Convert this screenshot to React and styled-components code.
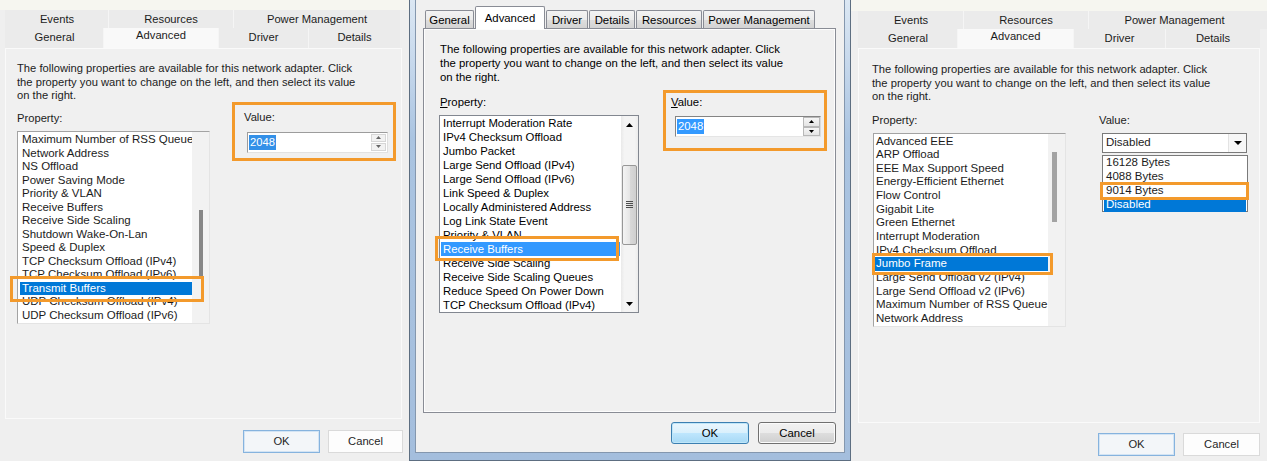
import React from 'react';
import styled, { createGlobalStyle } from 'styled-components';

const ORANGE = '#f39a2c';

const Global = createGlobalStyle`
  html, body { margin: 0; padding: 0; background: #f0f0f0; }
  body { font-family: "Liberation Sans", Arial, sans-serif; }
  * { box-sizing: border-box; }
`;

const Stage = styled.main`
  display: flex;
  width: 1267px;
  height: 461px;
  overflow: hidden;
  background: #f0f0f0;
`;

/* ---------------- shared ---------------- */
const Desc = styled.p`
  margin: 0 0 0 ${p => p.$ml || 0}px;
  white-space: nowrap;
  & > span { display: block; }
`;

const FieldRow = styled.div`
  display: flex;
  align-items: flex-start;
  margin-top: ${p => p.$mt || 0}px;
`;

const Column = styled.div`
  display: flex;
  flex-direction: column;
  align-items: flex-start;
  flex: none;
  width: ${p => (p.$w ? `${p.$w}px` : 'auto')};
  padding-top: ${p => p.$pt || 0}px;
  margin-left: ${p => p.$ml || 0}px;
`;

const Label = styled.div`
  margin-left: ${p => p.$ml || 0}px;
  white-space: nowrap;
`;

const Items = styled.ul`
  flex: 1;
  min-width: 0;
  margin: 0;
  list-style: none;
  font-size: ${p => (p.$fs ? `${p.$fs}px` : 'inherit')};
  padding: ${p => p.$pt}px ${p => p.$pr || 0}px 0 ${p => p.$pl}px;
`;

const Item = styled.li`
  position: relative;
  height: ${p => p.$rh}px;
  line-height: ${p => p.$rh}px;
  padding-left: ${p => p.$pl}px;
  white-space: nowrap;
  background: ${p => (p.$sel ? p.$selBg : 'transparent')};
  color: ${p => (p.$sel ? '#fff' : 'inherit')};
`;

const Callout = styled.span`
  position: absolute;
  z-index: 3;
  top: ${p => p.$t}px;
  right: ${p => p.$r}px;
  bottom: ${p => p.$b}px;
  left: ${p => p.$l}px;
  border: 3px solid ${ORANGE};
  pointer-events: none;
`;

const ValueBox = styled.div`
  display: flex;
  flex-direction: column;
  align-items: flex-start;
  flex: none;
  width: 164px;
  height: ${p => p.$h}px;
  margin-left: ${p => p.$ml}px;
  margin-top: ${p => p.$mt || 0}px;
  padding: ${p => p.$pt}px 0 0 ${p => p.$pl}px;
  border: 3px solid ${ORANGE};
`;

const SelText = styled.span`
  background: ${p => p.$bg};
  color: #fff;
  padding: 0 1px;
  line-height: 15px;
`;

const ButtonBar = styled.div`
  display: flex;
  justify-content: flex-end;
  gap: ${p => p.$gap}px;
  margin-top: ${p => p.$mt}px;
  padding-right: ${p => p.$pr}px;
`;

const Tri = ({ up, w = 7, h = 4, color = '#000' }) => (
  <svg width={w} height={h} viewBox={`0 0 ${w} ${h}`} style={{ display: 'block' }}>
    <polygon
      points={up ? `0,${h} ${w},${h} ${w / 2},0` : `0,0 ${w},0 ${w / 2},${h}`}
      fill={color}
    />
  </svg>
);

/* ---------------- Windows 10 style shots ---------------- */
const Shot = styled.section`
  flex: none;
  width: ${p => p.$w}px;
  height: 461px;
  display: flex;
  flex-direction: column;
  background: #efefef;
  color: #1c1c1c;
  font-size: 11.2px;
  line-height: 13.5px;
`;

const TopBand = styled.div`
  flex: none;
  height: ${p => p.$h}px;
  background: #f6f6f0;
`;

const TabRows = styled.div`
  display: flex;
  flex-direction: column;
  margin-left: ${p => p.$ml}px;
`;

const TabRow = styled.div`
  display: flex;
  width: ${p => p.$w}px;
  height: ${p => p.$h}px;
  background: #ebebeb;
`;

const Tab = styled.div`
  flex: none;
  width: ${p => p.$w}px;
  display: flex;
  align-items: center;
  justify-content: center;
  padding-top: ${p => p.$ptop || 0}px;
  padding-bottom: ${p => (p.$active ? p.$lift : 0)}px;
  background: ${p => (p.$active ? '#f9f9f9' : '#ebebeb')};
  border-left: 1px solid ${p => (p.$first ? 'transparent' : '#f5f5f5')};
  white-space: nowrap;
`;

const Page = styled.div`
  flex: none;
  margin: 0 ${p => p.$mr}px 0 ${p => p.$ml}px;
  height: ${p => p.$h}px;
  border: 1px solid #fafafa;
  background: #f0f0f0;
  padding: ${p => p.$pt}px 0 0 ${p => p.$pl}px;
`;

const ListBox = styled.div`
  display: flex;
  flex: none;
  width: ${p => p.$w}px;
  height: ${p => p.$h}px;
  margin: ${p => p.$mt}px 0 0 ${p => p.$ml || 0}px;
  background: #fff;
  border: 1px solid;
  border-color: #a3a3a3 #e4e4e4 #e4e4e4 #a3a3a3;
`;

const Track = styled.div`
  position: relative;
  flex: none;
  width: 17px;
  background: #f2f2f2;
`;

const ThinThumb = styled.div`
  width: ${p => p.$w}px;
  height: ${p => p.$h}px;
  margin: ${p => p.$t}px 0 0 ${p => p.$l}px;
  background: ${p => p.$c};
`;

const SpinBox = styled.div`
  display: flex;
  align-items: center;
  width: 141px;
  height: 21px;
  margin: 7px 0 0 3px;
  padding-left: 1px;
  background: #fff;
  border: 1px solid;
  border-color: #9c9c9c #dedede #e2e2e2 #9c9c9c;
`;

const SpinBtns = styled.div`
  display: flex;
  flex-direction: column;
  gap: 1px;
  margin-left: auto;
  width: 16px;
  height: 100%;
  padding: 1px 1px 1px 0;
`;

const SpinBtn = styled.div`
  flex: 1;
  display: flex;
  align-items: center;
  justify-content: center;
  background: #f2f2f2;
  border: 1px solid #d6d6d6;
`;

const Combo = styled.div`
  display: flex;
  align-items: center;
  width: 145px;
  height: 20px;
  margin: 6px 0 0 3px;
  padding-left: 3px;
  background: #fff;
  border: 1px solid #7a7a7a;
  font-size: 11.5px;
`;

const ComboArrow = styled.div`
  margin-left: auto;
  width: 18px;
  height: 100%;
  display: flex;
  align-items: center;
  justify-content: center;
  background: #f7f7f7;
  border-left: 1px solid #e3e3e3;
`;

const DropList = styled.ul`
  width: 146px;
  height: 57px;
  margin: 2px 0 0 3px;
  padding: 0 1px;
  list-style: none;
  background: #fff;
  border: 1px solid #7a7a7a;
  font-size: 11.5px;
`;

const Btn10 = styled.button`
  flex: none;
  width: ${p => p.$w}px;
  height: 23px;
  padding: 0;
  font: inherit;
  color: #1f1f1f;
  background: ${p => (p.$default ? '#f3f6f9' : '#fdfdfd')};
  border: 1px solid ${p => (p.$default ? '#86b3de' : '#dadada')};
  box-shadow: ${p => (p.$default ? 'inset 0 0 0 1px #d3e4f4' : 'none')};
`;

/* ---------------- Windows 7 style window ---------------- */
const Win7 = styled.section`
  flex: none;
  display: flex;
  width: 442px;
  height: 461px;
  padding: 0 5px 7px;
  border: 1px solid #5d6e81;
  border-top: none;
  background: linear-gradient(180deg, #dbe7f3 0%, #c6d8ec 14%, #aac4e1 30%, #a4bedd 100%);
`;

const Client = styled.div`
  flex: 1;
  display: flex;
  flex-direction: column;
  background: #f0f0f0;
  border: 1px solid #8497ae;
  border-top: none;
  color: #000;
  font-size: 11.35px;
  line-height: 14px;
`;

const TabStrip = styled.div`
  position: relative;
  z-index: 1;
  display: flex;
  align-items: flex-end;
  gap: 1px;
  height: 29px;
  margin-bottom: -1px;
  padding-left: 9px;
`;

const Tab7 = styled.div`
  flex: none;
  width: ${p => p.$w}px;
  height: ${p => (p.$active ? 23 : 18)}px;
  margin-bottom: ${p => (p.$active ? 0 : 1)}px;
  display: flex;
  align-items: center;
  justify-content: center;
  white-space: nowrap;
  border: 1px solid #898c95;
  border-bottom: none;
  border-radius: 2px 2px 0 0;
  background: ${p =>
    p.$active
      ? '#ffffff'
      : 'linear-gradient(180deg, #f3f3f3 0%, #ebebeb 50%, #dedede 51%, #d3d3d3 100%)'};
`;

const Page7 = styled.div`
  flex: none;
  height: 385px;
  margin: 0 8px 0 7px;
  padding: 13px 0 0 15px;
  border: 1px solid #898c95;
  box-shadow: inset 0 0 0 1px #fdfdfd;
`;

const ListBox7 = styled.div`
  display: flex;
  flex: none;
  width: 200px;
  height: 198px;
  margin-top: 6px;
  background: #fff;
  border: 1px solid #828790;
`;

const Scroll7 = styled.div`
  position: relative;
  flex: none;
  width: 17px;
  display: flex;
  flex-direction: column;
  background: linear-gradient(90deg, #e9e9e9 0%, #f4f4f4 20%, #f4f4f4 80%, #ececec 100%);
`;

const ArrowCell = styled.div`
  flex: none;
  height: 17px;
  display: flex;
  align-items: center;
  justify-content: center;
`;

const ScrollTrack7 = styled.div`
  flex: 1;
`;

const Thumb7 = styled.div`
  width: 15px;
  height: 80px;
  margin: 32px 0 0 1px;
  display: flex;
  align-items: center;
  justify-content: center;
  border: 1px solid #979797;
  border-radius: 2px;
  background: linear-gradient(90deg, #f4f4f4 0%, #e6e6e6 50%, #d9d9d9 51%, #cfcfcf 100%);
`;

const Spin7 = styled.div`
  display: flex;
  align-items: center;
  width: 146px;
  height: 21px;
  margin: 7px 0 0 4px;
  padding-left: 1px;
  background: #fff;
  border: 1px solid;
  border-color: #848484 #dadada #e5e5e5 #848484;
`;

const Spin7Btns = styled.div`
  display: flex;
  flex-direction: column;
  margin-left: auto;
  width: 17px;
  height: 100%;
`;

const Spin7Btn = styled.div`
  flex: 1;
  display: flex;
  align-items: center;
  justify-content: center;
  border: 1px solid #b8b8b8;
  background: linear-gradient(180deg, #f6f6f6, #e4e4e4);
`;

const Btn7 = styled.button`
  flex: none;
  width: 78px;
  height: 22px;
  padding: 0;
  font: inherit;
  color: #000;
  border-radius: 3px;
  border: 1px solid ${p => (p.$default ? '#3c7fb1' : '#707070')};
  box-shadow: inset 0 0 0 1px ${p => (p.$default ? '#bfe6f9' : '#fbfbfb')};
  background: ${p =>
    p.$default
      ? 'linear-gradient(180deg, #eaf6fd 0%, #d9f0fc 50%, #bee6fd 51%, #a7d9f5 100%)'
      : 'linear-gradient(180deg, #f2f2f2 0%, #ebebeb 50%, #dddddd 51%, #cfcfcf 100%)'};
`;

/* ---------------- data ---------------- */
const DESC = [
  'The following properties are available for this network adapter. Click',
  'the property you want to change on the left, and then select its value',
  'on the right.',
];

const LEFT_ITEMS = [
  'Maximum Number of RSS Queue', 'Network Address', 'NS Offload', 'Power Saving Mode',
  'Priority & VLAN', 'Receive Buffers', 'Receive Side Scaling', 'Shutdown Wake-On-Lan',
  'Speed & Duplex', 'TCP Checksum Offload (IPv4)', 'TCP Checksum Offload (IPv6)',
  'Transmit Buffers', 'UDP Checksum Offload (IPv4)', 'UDP Checksum Offload (IPv6)',
];

const MID_ITEMS = [
  'Interrupt Moderation Rate', 'IPv4 Checksum Offload', 'Jumbo Packet',
  'Large Send Offload (IPv4)', 'Large Send Offload (IPv6)', 'Link Speed & Duplex',
  'Locally Administered Address', 'Log Link State Event', 'Priority & VLAN',
  'Receive Buffers', 'Receive Side Scaling', 'Receive Side Scaling Queues',
  'Reduce Speed On Power Down', 'TCP Checksum Offload (IPv4)',
];

const RIGHT_ITEMS = [
  'Advanced EEE', 'ARP Offload', 'EEE Max Support Speed', 'Energy-Efficient Ethernet',
  'Flow Control', 'Gigabit Lite', 'Green Ethernet', 'Interrupt Moderation',
  'IPv4 Checksum Offload', 'Jumbo Frame', 'Large Send Offload v2 (IPv4)',
  'Large Send Offload v2 (IPv6)', 'Maximum Number of RSS Queue', 'Network Address',
];

const DROP_ITEMS = ['16128 Bytes', '4088 Bytes', '9014 Bytes', 'Disabled'];

const DescBlock = ({ ml }) => (
  <Desc $ml={ml}>
    {DESC.map(l => <span key={l}>{l}</span>)}
  </Desc>
);

const Win10Tabs = ({ ml, rows, lift }) => (
  <TabRows $ml={ml}>
    {rows.map((row, ri) => (
      <TabRow key={ri} $w={row.w} $h={row.h}>
        {row.tabs.map(([name, w, active], i) => (
          <Tab key={name} $w={w} $active={active} $first={i === 0} $lift={lift} $ptop={ri === 0 ? 2 : 0}>
            {name}
          </Tab>
        ))}
      </TabRow>
    ))}
  </TabRows>
);

/* ---------------- panels ---------------- */
const LeftShot = () => (
  <Shot $w={409}>
    <TopBand $h={10} />
    <Win10Tabs
      ml={5}
      lift={4}
      rows={[
        { w: 395, h: 18, tabs: [['Events', 103], ['Resources', 125], ['Power Management', 167]] },
        { w: 395, h: 20, tabs: [['General', 98], ['Advanced', 115, true], ['Driver', 90], ['Details', 92]] },
      ]}
    />
    <Page $ml={5} $mr={7} $h={371} $pt={13} $pl={11}>
      <DescBlock />
      <FieldRow>
        <Column $w={193} $pt={9}>
          <Label>Property:</Label>
          <ListBox $w={193} $h={193} $mt={6}>
            <Items $pt={1.25} $pl={2} $fs={11.5}>
              {LEFT_ITEMS.map((t, i) => (
                <Item key={t} $rh={13.5} $pl={2} $sel={i === 11} $selBg="#0078d7">
                  {t}
                  {i === 11 && <Callout $t={-6} $b={-7} $l={-10} $r={-12} />}
                </Item>
              ))}
            </Items>
            <Track>
              <ThinThumb $w={4} $h={68} $t={78} $l={7} $c="#868686" />
            </Track>
          </ListBox>
        </Column>
        <ValueBox $ml={22} $mt={-0.5} $h={59} $pt={6} $pl={9}>
          <Label>Value:</Label>
          <SpinBox>
            <SelText $bg="#3390e8">2048</SelText>
            <SpinBtns>
              <SpinBtn><Tri up w={5} h={3} color="#666" /></SpinBtn>
              <SpinBtn><Tri w={5} h={3} color="#666" /></SpinBtn>
            </SpinBtns>
          </SpinBox>
        </ValueBox>
      </FieldRow>
    </Page>
    <ButtonBar $mt={11} $pr={6} $gap={8}>
      <Btn10 $w={77} $default>OK</Btn10>
      <Btn10 $w={75}>Cancel</Btn10>
    </ButtonBar>
  </Shot>
);

const MiddleWindow = () => (
  <Win7>
    <Client>
      <TabStrip>
        {[['General', 49], ['Advanced', 70, true], ['Driver', 42], ['Details', 46], ['Resources', 66], ['Power Management', 112]].map(
          ([n, w, a]) => (
            <Tab7 key={n} $w={w} $active={a}>{n}</Tab7>
          )
        )}
      </TabStrip>
      <Page7>
        <DescBlock ml={1} />
        <FieldRow $mt={6}>
          <Column $pt={5}>
            <Label $ml={1}><u>P</u>roperty:</Label>
            <ListBox7>
              <Items $pt={0} $pl={1} $pr={1}>
                {MID_ITEMS.map((t, i) => (
                  <Item key={t} $rh={14} $pl={2} $sel={i === 9} $selBg="#3399ff">
                    {t}
                    {i === 9 && <Callout $t={-6} $b={-5} $l={-6} $r={1} />}
                  </Item>
                ))}
              </Items>
              <Scroll7>
                <ArrowCell><Tri up w={7} h={4} /></ArrowCell>
                <ScrollTrack7>
                  <Thumb7>
                    <svg width="7" height="8" viewBox="0 0 7 8" style={{ display: 'block' }}>
                      {[0, 2, 4, 6].map(y => (
                        <rect key={y} x="0" y={y} width="7" height="1" fill="#4d4d4d" />
                      ))}
                    </svg>
                  </Thumb7>
                </ScrollTrack7>
                <ArrowCell><Tri w={7} h={4} /></ArrowCell>
              </Scroll7>
            </ListBox7>
          </Column>
          <ValueBox $ml={24} $h={61} $pt={2} $pl={5}>
            <Label><u>V</u>alue:</Label>
            <Spin7>
              <SelText $bg="#3399ff">2048</SelText>
              <Spin7Btns>
                <Spin7Btn><Tri up w={5} h={3} /></Spin7Btn>
                <Spin7Btn><Tri w={5} h={3} /></Spin7Btn>
              </Spin7Btns>
            </Spin7>
          </ValueBox>
        </FieldRow>
      </Page7>
      <ButtonBar $mt={9} $pr={8} $gap={9}>
        <Btn7 $default>OK</Btn7>
        <Btn7>Cancel</Btn7>
      </ButtonBar>
    </Client>
  </Win7>
);

const RightShot = () => (
  <Shot $w={416}>
    <TopBand $h={11} />
    <Win10Tabs
      ml={7}
      lift={3}
      rows={[
        { w: 409, h: 18, tabs: [['Events', 105], ['Resources', 125], ['Power Management', 172]] },
        { w: 402, h: 19, tabs: [['General', 99], ['Advanced', 116, true], ['Driver', 92], ['Details', 95]] },
      ]}
    />
    <Page $ml={7} $mr={7} $h={375} $pt={14} $pl={13}>
      <DescBlock />
      <FieldRow>
        <Column $w={194} $pt={10}>
          <Label>Property:</Label>
          <ListBox $w={193} $h={194} $mt={6} $ml={1}>
            <Items $pt={0.5} $pl={1} $fs={11.5}>
              {RIGHT_ITEMS.map((t, i) => (
                <Item key={t} $rh={13.65} $pl={1} $sel={i === 9} $selBg="#0078d7">
                  {t}
                  {i === 9 && <Callout $t={-4} $b={-4} $l={-3} $r={-5} />}
                </Item>
              ))}
            </Items>
            <Track>
              <ThinThumb $w={5} $h={70} $t={18} $l={4} $c="#a3a3a3" />
            </Track>
          </ListBox>
        </Column>
        <Column $pt={10} $ml={33}>
          <Label>Value:</Label>
          <Combo>
            Disabled
            <ComboArrow><Tri w={8} h={4} /></ComboArrow>
          </Combo>
          <DropList>
            {DROP_ITEMS.map((t, i) => (
              <Item key={t} $rh={13.9} $pl={2} $sel={i === 3} $selBg="#0078d7">
                {t}
                {i === 2 && <Callout $t={-2} $b={-2} $l={-4} $r={-3} />}
              </Item>
            ))}
          </DropList>
        </Column>
      </FieldRow>
    </Page>
    <ButtonBar $mt={10} $pr={7} $gap={8}>
      <Btn10 $w={77} $default>OK</Btn10>
      <Btn10 $w={77}>Cancel</Btn10>
    </ButtonBar>
  </Shot>
);

export default function App() {
  return (
    <>
      <Global />
      <Stage>
        <LeftShot />
        <MiddleWindow />
        <RightShot />
      </Stage>
    </>
  );
}
